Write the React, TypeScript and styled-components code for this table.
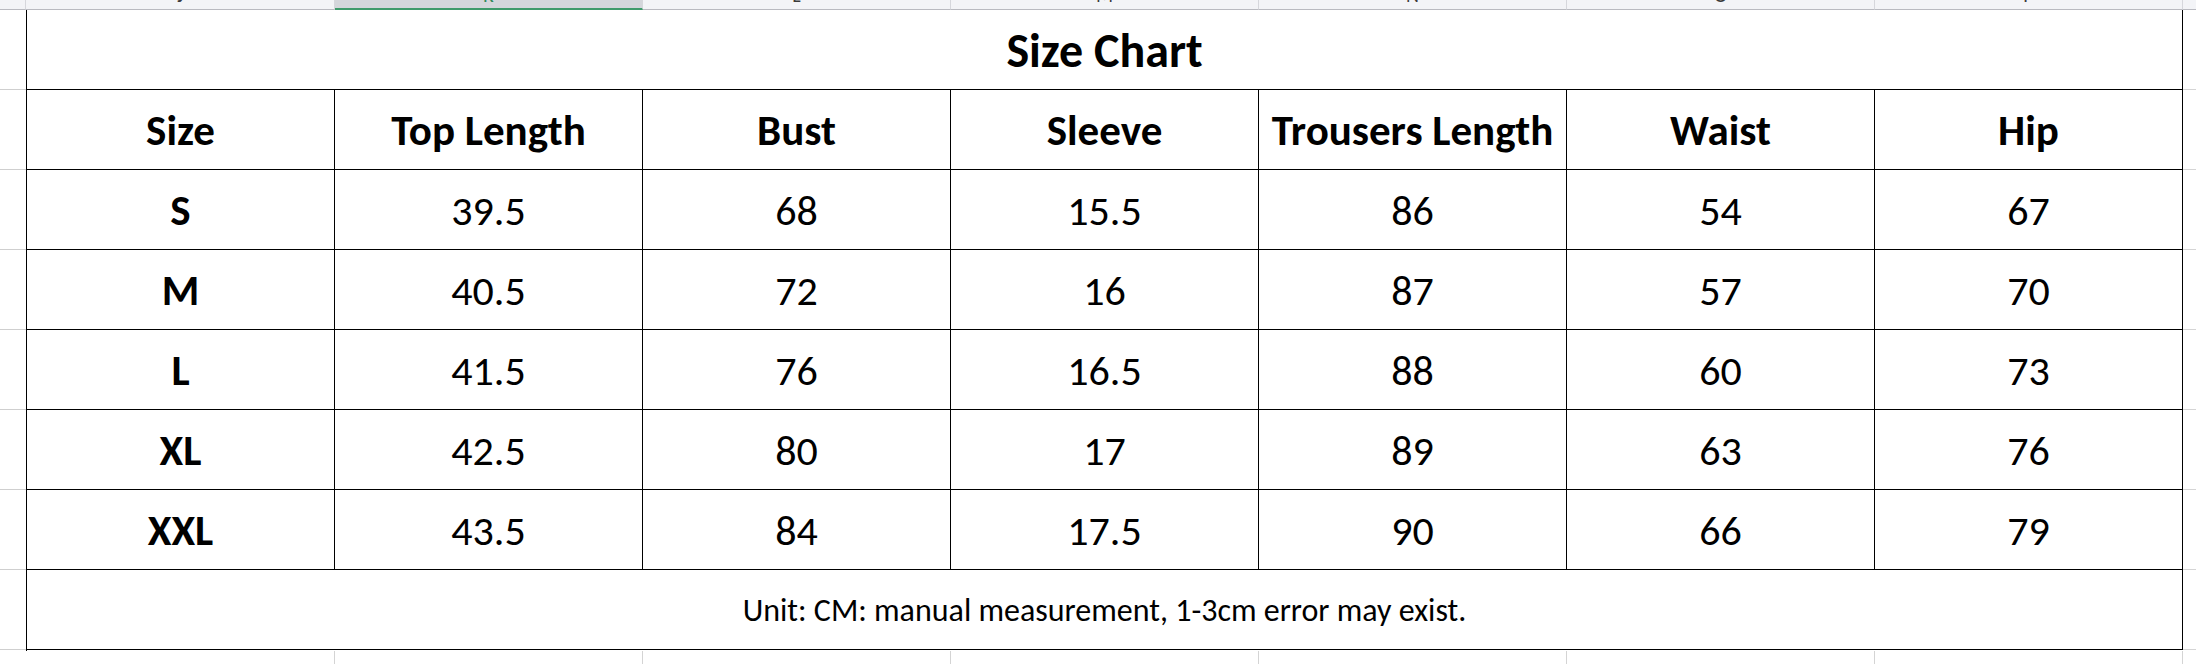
import React from 'react';
import styled, { createGlobalStyle } from 'styled-components';

const GlobalStyle = createGlobalStyle`
  html, body {
    margin: 0;
    padding: 0;
    background: #ffffff;
  }
  body {
    font-family: Carlito, Calibri, "Open Sans", sans-serif;
    color: #000;
  }
`;

const COL_WIDTH = 308;
const ROW_HEIGHT = 80;
const ROW_HEAD = 26;
const STRIP = 10;

const columns = ['J', 'K', 'L', 'M', 'N', 'O', 'P'];
const headers = ['Size', 'Top Length', 'Bust', 'Sleeve', 'Trousers Length', 'Waist', 'Hip'];
const rows = [
  ['S', '39.5', '68', '15.5', '86', '54', '67'],
  ['M', '40.5', '72', '16', '87', '57', '70'],
  ['L', '41.5', '76', '16.5', '88', '60', '73'],
  ['XL', '42.5', '80', '17', '89', '63', '76'],
  ['XXL', '43.5', '84', '17.5', '90', '66', '79'],
];

const Sheet = styled.div`
  display: grid;
  grid-template-columns: ${ROW_HEAD}px ${COL_WIDTH * 7 + 1}px 1fr;
  grid-template-rows: ${STRIP}px ${ROW_HEIGHT * 8 + 1}px 1fr;
  width: 100vw;
  height: 100vh;
  overflow: hidden;
`;

const Corner = styled.div`
  background: #f3f4f7;
  border-bottom: 1px solid #b9bac0;
  border-right: 1px solid #d6d7dc;
  box-sizing: border-box;
`;

const ColumnStrip = styled.div`
  display: grid;
  grid-template-columns: 1px repeat(7, ${COL_WIDTH}px);
  background: #f3f4f7;
`;

const StripSpacer = styled.div`
  border-bottom: 1px solid #b9bac0;
`;

const ColumnHead = styled.div<{ $active?: boolean }>`
  display: flex;
  justify-content: center;
  align-items: flex-end;
  overflow: hidden;
  box-sizing: border-box;
  background: ${({ $active }) => ($active ? '#d4d6db' : '#f3f4f7')};
  border-right: 1px solid #d6d7dc;
  border-bottom: ${({ $active }) => ($active ? '2px solid #3f9a6b' : '1px solid #b9bac0')};

  span {
    font-size: 20px;
    line-height: 1;
    margin-bottom: ${({ $active }) => ($active ? '3px' : '4px')};
    color: ${({ $active }) => ($active ? '#2f8a5a' : '#3a3a3a')};
  }
`;

const StripFiller = styled.div`
  background: #f3f4f7;
  border-bottom: 1px solid #b9bac0;
`;

const RowHeads = styled.div`
  background-image: repeating-linear-gradient(
    to bottom,
    transparent 0,
    transparent ${ROW_HEIGHT - 1}px,
    #cfcfcf ${ROW_HEIGHT - 1}px,
    #cfcfcf ${ROW_HEIGHT}px
  );
`;

const Table = styled.div`
  display: grid;
  grid-template-columns: repeat(7, ${COL_WIDTH}px);
  grid-auto-rows: ${ROW_HEIGHT}px;
  border-left: 1px solid #000;
`;

const Cell = styled.div<{ $bold?: boolean }>`
  display: flex;
  align-items: center;
  justify-content: center;
  box-sizing: border-box;
  border-right: 1px solid #000;
  border-bottom: 1px solid #000;
  font-size: ${({ $bold }) => ($bold ? '43px' : '42px')};
  font-weight: ${({ $bold }) => ($bold ? 700 : 400)};
  padding-top: 2px;
  white-space: nowrap;
`;

const TitleCell = styled(Cell)`
  grid-column: 1 / -1;
  font-size: 48px;
  font-weight: 700;
`;

const NoteCell = styled(Cell)`
  grid-column: 1 / -1;
  font-size: 32px;
`;

const RightGutter = styled.div`
  background-image: repeating-linear-gradient(
    to bottom,
    transparent 0,
    transparent ${ROW_HEIGHT - 1}px,
    #d4d4d4 ${ROW_HEIGHT - 1}px,
    #d4d4d4 ${ROW_HEIGHT}px
  );
`;

const BottomGutter = styled.div`
  display: grid;
  grid-template-columns: 1px repeat(7, ${COL_WIDTH}px);
`;

const BottomCell = styled.div`
  border-right: 1px solid #d4d4d4;
`;

const Blank = styled.div``;

export default function App() {
  return (
    <>
      <GlobalStyle />
      <Sheet>
        <Corner />
        <ColumnStrip>
          <StripSpacer />
          {columns.map((c, i) => (
            <ColumnHead key={c} $active={i === 1}>
              <span>{c}</span>
            </ColumnHead>
          ))}
        </ColumnStrip>
        <StripFiller />

        <RowHeads />
        <Table>
          <TitleCell>Size Chart</TitleCell>
          {headers.map((h) => (
            <Cell key={h} $bold>
              {h}
            </Cell>
          ))}
          {rows.map((r) =>
            r.map((v, i) => (
              <Cell key={r[0] + i} $bold={i === 0}>
                {v}
              </Cell>
            ))
          )}
          <NoteCell>Unit: CM: manual measurement, 1-3cm error may exist.</NoteCell>
        </Table>
        <RightGutter />

        <Blank />
        <BottomGutter>
          <Blank />
          {columns.map((c) => (
            <BottomCell key={c} />
          ))}
        </BottomGutter>
        <Blank />
      </Sheet>
    </>
  );
}
